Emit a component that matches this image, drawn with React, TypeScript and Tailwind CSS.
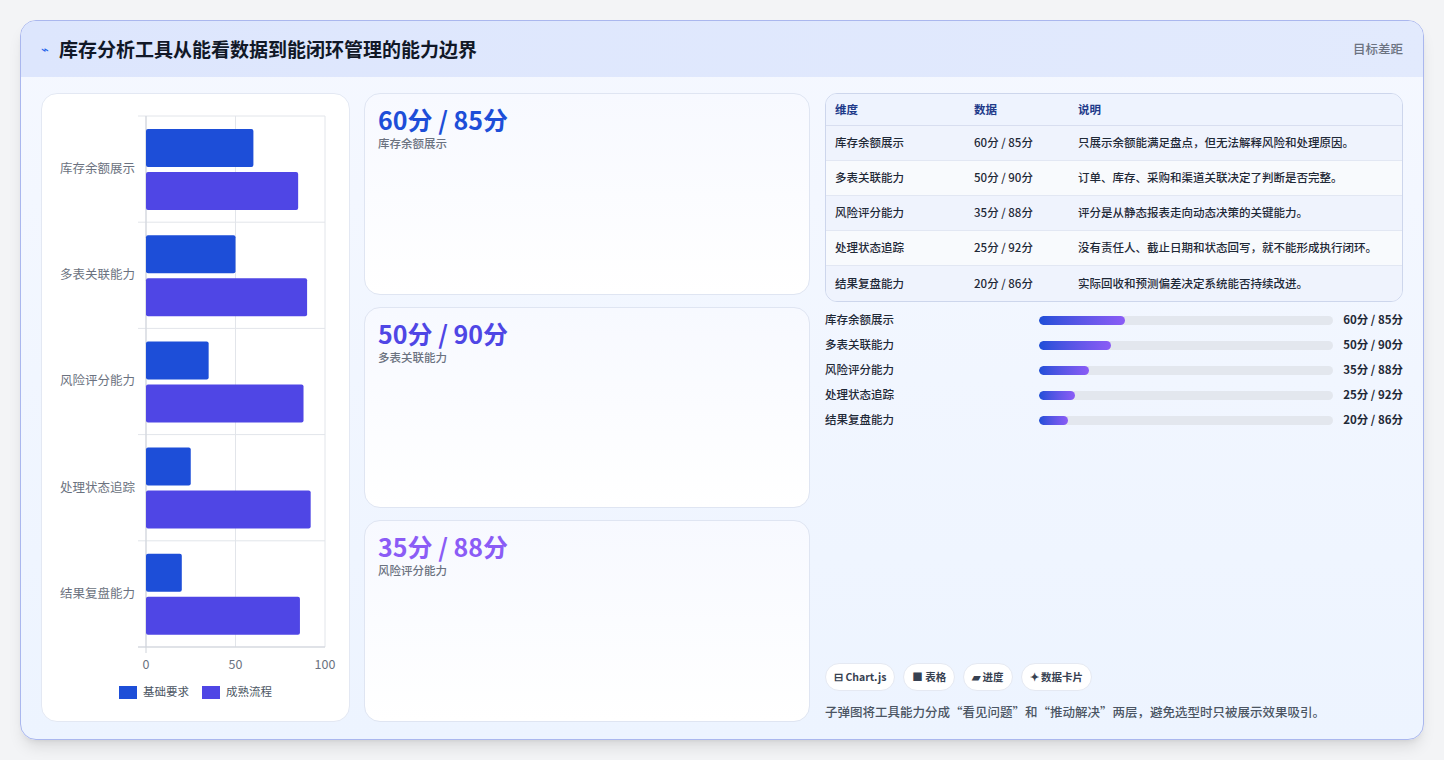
const rows = [
  { name: "库存余额展示", a: 60, b: 85, desc: "只展示余额能满足盘点，但无法解释风险和处理原因。" },
  { name: "多表关联能力", a: 50, b: 90, desc: "订单、库存、采购和渠道关联决定了判断是否完整。" },
  { name: "风险评分能力", a: 35, b: 88, desc: "评分是从静态报表走向动态决策的关键能力。" },
  { name: "处理状态追踪", a: 25, b: 92, desc: "没有责任人、截止日期和状态回写，就不能形成执行闭环。" },
  { name: "结果复盘能力", a: 20, b: 86, desc: "实际回收和预测偏差决定系统能否持续改进。" },
];

const font = { fontFamily: '"Noto Sans CJK SC", "Noto Sans", sans-serif' };

function Chart() {
  const x0 = 104;
  const w = 179;
  const top = 22;
  const rh = 106.2;
  return (
    <svg width="309" height="627" style={font}>
      {[0, 50, 100].map((v) => (
        <line key={v} x1={x0 + (w * v) / 100} x2={x0 + (w * v) / 100} y1={top} y2={top + rh * 5} stroke="#e2e5ea" />
      ))}
      {[0, 1, 2, 3, 4, 5].map((i) => (
        <line key={i} x1={x0 - 8} x2={x0 + w} y1={top + rh * i} y2={top + rh * i} stroke="#e2e5ea" />
      ))}
      <line x1={x0} x2={x0} y1={top} y2={top + rh * 5 + 6} stroke="#cfd3da" />
      <line x1={x0 - 8} x2={x0 + w} y1={top + rh * 5} y2={top + rh * 5} stroke="#cfd3da" />
      {rows.map((r, i) => {
        const t = top + rh * i;
        return (
          <g key={r.name}>
            <rect x={x0} y={t + 13} width={(w * r.a) / 100} height={38} rx={2} fill="#1d4ed8" />
            <rect x={x0} y={t + 56} width={(w * r.b) / 100} height={38} rx={2} fill="#4f46e5" />
            <text x={x0 - 11} y={t + 57} textAnchor="end" fontSize="12.5" fill="#6b7280">{r.name}</text>
          </g>
        );
      })}
      {[0, 50, 100].map((v) => (
        <text key={v} x={x0 + (w * v) / 100} y={575} textAnchor="middle" fontSize="12.5" fill="#6b7280">{v}</text>
      ))}
      <rect x={77} y={592} width={18} height={13} fill="#1d4ed8" />
      <text x={101} y={602} fontSize="11.5" fill="#4b5563">基础要求</text>
      <rect x={160} y={592} width={18} height={13} fill="#4f46e5" />
      <text x={184} y={602} fontSize="11.5" fill="#4b5563">成熟流程</text>
    </svg>
  );
}

const cards = [
  { v: "60分 / 85分", l: "库存余额展示", c: "text-[#1d4ed8]" },
  { v: "50分 / 90分", l: "多表关联能力", c: "text-[#4f46e5]" },
  { v: "35分 / 88分", l: "风险评分能力", c: "text-[#8b5cf6]" },
];

export default function App() {
  return (
    <div className="w-[1444px] h-[760px] bg-[#f3f4f6] p-5" style={font}>
      <div className="h-[720px] rounded-2xl border border-[#aab7ee] bg-gradient-to-b from-[#f5f8ff] to-[#edf4ff] shadow-lg overflow-hidden flex flex-col">
        <div className="h-[56px] bg-gradient-to-r from-[#dde6fd] to-[#e2eafd] flex items-center justify-between px-5 shrink-0">
          <div className="flex items-center gap-2.5">
            <span className="text-[#2563eb] text-[13px]">⌁</span>
            <span className="text-[19px] font-bold text-[#111827]">库存分析工具从能看数据到能闭环管理的能力边界</span>
          </div>
          <span className="text-[12.5px] text-[#6b7280] font-medium">目标差距</span>
        </div>
        <div className="flex-1 flex gap-[14px] px-5 pt-[16px] pb-[19px]">
          <div className="w-[309px] bg-white rounded-2xl border border-[#e3e8f3]">
            <Chart />
          </div>
          <div className="w-[446px] flex flex-col gap-[12px]">
            {cards.map((c) => (
              <div key={c.l} className="flex-1 rounded-2xl border border-[#dfe5f2] bg-gradient-to-b from-[#f7f9ff] to-white px-[13px] py-[9px]">
                <div className={`text-[25px] font-bold leading-[32px] ${c.c}`}>{c.v}</div>
                <div className="text-[11.5px] text-[#6b7280] font-medium">{c.l}</div>
              </div>
            ))}
          </div>
          <div className="flex-1 flex flex-col pl-[1px]">
            <div className="rounded-xl border border-[#cdd6ec] overflow-hidden text-[11.5px]">
              <div className="flex h-[32px] items-center bg-[#eef3fe] border-b border-[#d8def0] font-bold text-[#1e3a8a]">
                <div className="w-[148px] pl-[9px]">维度</div>
                <div className="w-[104px]">数据</div>
                <div>说明</div>
              </div>
              {rows.map((r, i) => (
                <div key={r.name} className={`flex h-[35px] items-center text-[#1f2937] font-medium ${i % 2 ? "bg-[#f8fafd]" : "bg-[#eff3fd]"} ${i < 4 ? "border-b border-[#e2e7f3]" : ""}`}>
                  <div className="w-[148px] pl-[9px]">{r.name}</div>
                  <div className="w-[104px]">{r.a}分 / {r.b}分</div>
                  <div>{r.desc}</div>
                </div>
              ))}
            </div>
            <div className="mt-[9px] flex flex-col gap-[7px] text-[11.5px] font-medium text-[#1f2937]">
              {rows.map((r) => (
                <div key={r.name} className="flex items-center h-[18px]">
                  <div className="w-[214px]">{r.name}</div>
                  <div className="w-[294px] h-[9px] rounded-full bg-[#e3e7ee] overflow-hidden">
                    <div className="h-full rounded-full bg-gradient-to-r from-[#1d4ed8] to-[#8b5cf6]" style={{ width: `${r.a * 1.43}px` }} />
                  </div>
                  <div className="flex-1 text-right font-bold">{r.a}分 / {r.b}分</div>
                </div>
              ))}
            </div>
            <div className="mt-auto flex gap-[8px] text-[10.5px] font-bold text-[#374151]">
              {["⊟ Chart.js", "■ 表格", "▰ 进度", "✦ 数据卡片"].map((t) => (
                <span key={t} className="h-[28px] px-[8px] rounded-full bg-white border border-[#e5e9f2] flex items-center">{t}</span>
              ))}
            </div>
            <div className="mt-[12px] text-[12.5px] font-medium text-[#4b5563]">子弹图将工具能力分成“看见问题”和“推动解决”两层，避免选型时只被展示效果吸引。</div>
          </div>
        </div>
      </div>
    </div>
  );
}
